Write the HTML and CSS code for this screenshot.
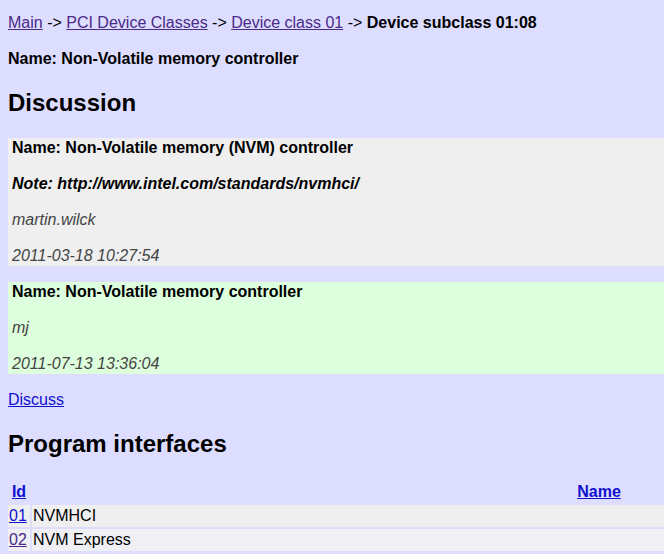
FILE: index.html
```html
<!DOCTYPE html>
<html>
<head>
<meta charset="utf-8">
<title>Device subclass 01:08</title>
<link rel="stylesheet" href="styles.css">
</head>
<body>
<div class="page">
  <p class="crumbs"><a class="visited" href="#">Main</a> -&gt; <a class="visited" href="#">PCI Device Classes</a> -&gt; <a class="visited" href="#">Device class 01</a> -&gt; <b>Device subclass 01:08</b></p>
  <p class="name"><b>Name: Non-Volatile memory controller</b></p>
  <h2 class="heading">Discussion</h2>
  <div class="discussion">
    <div class="item">
      <p class="line"><b>Name: Non-Volatile memory (NVM) controller</b></p>
      <p class="line note">Note: http://www.intel.com/standards/nvmhci/</p>
      <p class="line meta">martin.wilck</p>
      <p class="line meta">2011-03-18 10:27:54</p>
    </div>
    <div class="item approved">
      <p class="line"><b>Name: Non-Volatile memory controller</b></p>
      <p class="line meta">mj</p>
      <p class="line meta">2011-07-13 13:36:04</p>
    </div>
  </div>
  <p class="discuss"><a class="link" href="#">Discuss</a></p>
  <h2 class="heading">Program interfaces</h2>
  <table class="subnodes">
    <tr class="head"><th class="col-id"><a class="link" href="#">Id</a></th><th><a class="link" href="#">Name</a></th></tr>
    <tr class="odd"><td><a class="link" href="#">01</a></td><td>NVMHCI</td></tr>
    <tr class="even"><td><a class="visited" href="#">02</a></td><td>NVM Express</td></tr>
  </table>
</div>
</body>
</html>
```
FILE: styles.css
```css
html {
  overflow: hidden;
  background: #ddddff;
}
body {
  margin: 0;
  padding: 0 8px;
  font-family: "Liberation Sans", Arial, sans-serif;
  font-size: 16px;
  line-height: 20px;
  color: #000;
}
.page {
  width: 1162px;
  padding-top: 13px;
}
p {
  margin: 0;
}
a.link {
  color: #1010d0;
}
a.visited {
  color: #4a2a88;
}
.crumbs {
  margin-bottom: 16px;
}
.name {
  margin-bottom: 20px;
}
.heading {
  font-size: 24px;
  line-height: 28px;
  margin: 0 0 21px;
}
.discussion {
  display: flex;
  flex-direction: column;
  gap: 16px;
  margin-bottom: 16px;
}
.item {
  background: #efefef;
  padding: 0 4px;
  display: flex;
  flex-direction: column;
  gap: 16px;
}
.item.approved {
  background: #ddffdd;
}
.note {
  font-weight: bold;
  font-style: italic;
}
.meta {
  font-style: italic;
  color: #444;
}
.discuss {
  margin-bottom: 20px;
}
.heading + .subnodes {
  margin-top: 0;
}
.subnodes {
  width: 100%;
  border-spacing: 2px;
  margin-left: -2px;
  margin-top: -1px;
}
.subnodes th,
.subnodes td {
  padding: 1px;
  line-height: 20px;
}
.subnodes th {
  font-weight: bold;
  text-align: center;
}
.subnodes td {
  text-align: left;
}
.col-id {
  width: 20px;
}
tr.odd td {
  background: #efefef;
}
tr.even td {
  background: #efeff4;
}
```
